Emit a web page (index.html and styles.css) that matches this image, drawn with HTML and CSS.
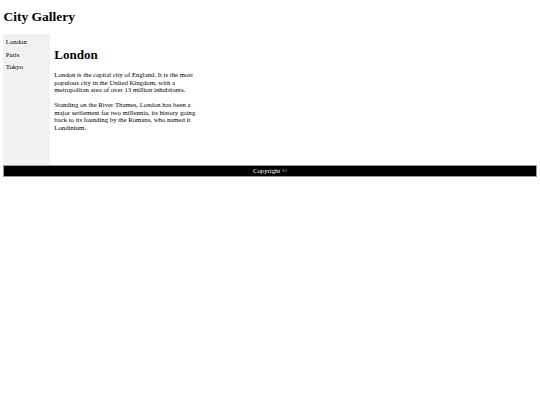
FILE: index.html
```html
<!DOCTYPE html>
<html>
<head>
<meta charset="utf-8">
<title>City Gallery</title>
<link rel="stylesheet" href="styles.css">
</head>
<body>
<header class="site-header">
  <h1 class="site-title">City Gallery</h1>
</header>
<div class="layout">
  <nav class="side-nav">
    <ul class="nav-list">
      <li class="nav-item">London</li>
      <li class="nav-item">Paris</li>
      <li class="nav-item">Tokyo</li>
    </ul>
  </nav>
  <article class="content">
    <h2 class="content-title">London</h2>
    <p class="content-text">London is the capital city of England. It is the most populous city in the United Kingdom, with a metropolitan area of over 13 million inhabitants.</p>
    <p class="content-text">Standing on the River Thames, London has been a major settlement for two millennia, its history going back to its founding by the Romans, who named it Londinium.</p>
  </article>
</div>
<footer class="site-footer">Copyright &copy;</footer>
</body>
</html>
```

FILE: styles.css
```css
html {
  background: #ffffff;
}

body {
  margin: 0;
  padding: 0 3.4px 3.4px 3.4px;
  font-family: "Liberation Serif", "Times New Roman", serif;
  color: #000000;
}

.site-header {
  padding-top: 0.1px;
}

.site-title {
  font-size: 13.5px;
  font-weight: bold;
  margin: 8.9px 0 9.5px 0;
  line-height: normal;
}

.layout {
  display: flex;
  height: 130.5px;
}

.side-nav {
  width: 46.6px;
  flex: 0 0 46.6px;
  background: #f1f1f1;
}

.nav-list {
  list-style: none;
  margin: 0;
  padding: 3.5px 0 0 2.4px;
}

.nav-item {
  font-size: 6.75px;
  line-height: 7.76px;
  margin-bottom: 4.8px;
}

.content {
  width: 148px;
  padding: 3.7px 0 0 4.3px;
}

.content-title {
  font-size: 13px;
  font-weight: bold;
  line-height: normal;
  margin: 8.7px 0 8px 0;
}

.content-text {
  font-size: 6.75px;
  line-height: 7.76px;
  margin: 6.75px 0;
}

.site-footer {
  background: #000000;
  color: #ffffff;
  border: 1px solid #9a9a9a;
  text-align: center;
  font-size: 6.75px;
  line-height: 7.76px;
  padding: 0.9px 0;
}
```
